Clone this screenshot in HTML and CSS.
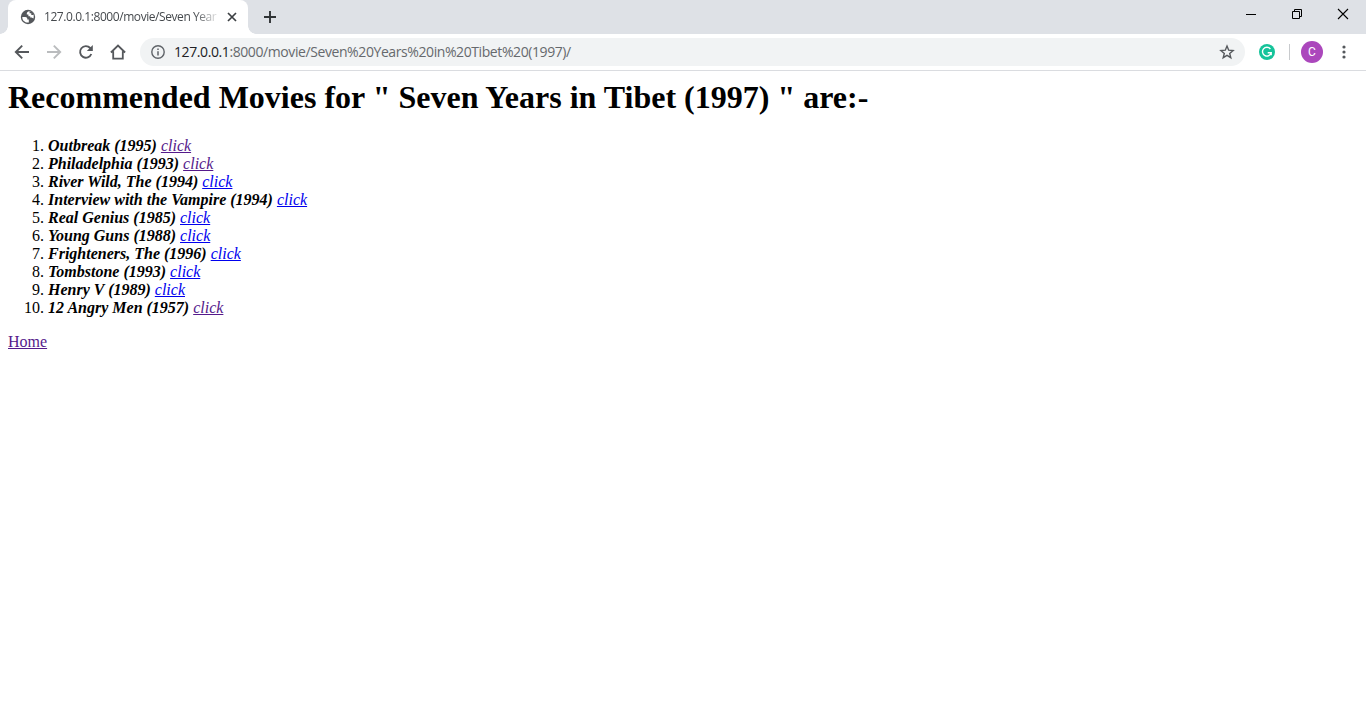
FILE: index.html
```html
<!DOCTYPE html>
<html lang="en">
<head>
<meta charset="utf-8">
<title>Recommended Movies</title>
<link rel="stylesheet" href="styles.css">
</head>
<body>
<div class="tabstrip">
  <div class="tab">
    <svg class="globe" width="16" height="16" viewBox="0 0 16 16"><circle cx="8" cy="8" r="7.2" fill="#54575b"/><path d="M2.3 8H5.2C6.6 8 7.3 8.8 7.3 9.8V10.4H8.8V13.5C5 14 2.2 11.4 2.3 8Z M9 2.3C7.4 2.7 6.8 3.6 6.8 4.8V5.4H8.4V7.2H10.2V8.6H11.6L13.5 9.4C14.6 5.3 12.2 2.3 9 2.3Z" fill="#fff"/><path d="M9.6 2.2V4.3H11.3V6H13.8L12.4 3Z" fill="#54575b"/></svg>
    <span class="tab-title">127.0.0.1:8000/movie/Seven Year</span>
    <svg class="tab-close" width="10" height="10" viewBox="0 0 10 10"><path d="M1 1L9 9M9 1L1 9" stroke="#3c4043" stroke-width="1.7"/></svg>
  </div>
  <svg class="new-tab" width="12" height="12" viewBox="0 0 12 12"><path d="M6 0V12M0 6H12" stroke="#303336" stroke-width="1.9"/></svg>
  <div class="window-controls">
    <svg width="12" height="12" viewBox="0 0 12 12"><path d="M1 6.5H11" stroke="#000"/></svg>
    <svg width="12" height="12" viewBox="0 0 12 12" fill="none" stroke="#000"><path d="M1.5 3.5H8.5V10.5H1.5Z M3.5 3.5V1.5H10.5V8.5H8.5"/></svg>
    <svg width="12" height="12" viewBox="0 0 12 12"><path d="M1 1L11 11M11 1L1 11" stroke="#000" stroke-width="1.1"/></svg>
  </div>
</div>
<div class="toolbar">
  <div class="nav">
    <svg width="16" height="16" viewBox="0 0 16 16" fill="none" stroke="#55585c" stroke-width="1.9"><path d="M15 8H2M8.2 1.6L1.8 8L8.2 14.4"/></svg>
    <svg width="16" height="16" viewBox="0 0 16 16" fill="none" stroke="#babcbe" stroke-width="1.9"><path d="M1 8H14M7.8 1.6L14.2 8L7.8 14.4"/></svg>
    <svg width="16" height="16" viewBox="0 0 16 16"><path d="M13.3 10A5.8 5.8 0 1 1 12.2 4L13.2 5.2" fill="none" stroke="#55585c" stroke-width="1.9"/><path d="M14.8 1V7H8.8Z" fill="#55585c"/></svg>
    <svg width="16" height="16" viewBox="0 0 16 16" fill="none" stroke="#55585c" stroke-width="1.8"><path d="M.9 8.5L8 1.5L15.1 8.5M3.2 7.3V14.6H12.8V7.3"/></svg>
  </div>
  <div class="omnibox">
    <svg class="info" width="14" height="14" viewBox="0 0 14 14"><circle cx="7" cy="7" r="6.2" fill="none" stroke="#5f6368" stroke-width="1.4"/><path d="M7 6.2V10.4M7 3.6V5.1" stroke="#5f6368" stroke-width="1.5"/></svg>
    <span class="url"><span class="host">127.0.0.1</span>:8000/movie/Seven%20Years%20in%20Tibet%20(1997)/</span>
    <svg class="star" width="16" height="16" viewBox="0 0 16 16"><path d="M8 2.1L9.7 6.2L14.1 6.5L10.7 9.4L11.8 13.7L8 11.4L4.2 13.7L5.3 9.4L1.9 6.5L6.3 6.2Z" fill="none" stroke="#55585c" stroke-width="1.4"/></svg>
  </div>
  <svg class="extension" width="16" height="16" viewBox="0 0 16 16"><circle cx="8" cy="8" r="8" fill="#15c39a"/><path d="M11.4 5A4.4 4.4 0 1 0 12.2 8.7H8.7M12.2 8.7V11.3" fill="none" stroke="#fff" stroke-width="1.4"/></svg>
  <span class="divider"></span>
  <span class="avatar">C</span>
  <svg class="menu" width="4" height="14" viewBox="0 0 4 14" fill="#55585c"><circle cx="2" cy="2" r="1.6"/><circle cx="2" cy="7" r="1.6"/><circle cx="2" cy="12" r="1.6"/></svg>
</div>
<main class="page">
  <h1 class="heading">Recommended Movies for " Seven Years in Tibet (1997) " are:-</h1>
  <ol class="movies">
    <li><i><b>Outbreak (1995)</b> <a class="link visited" href="#">click</a></i></li>
    <li><i><b>Philadelphia (1993)</b> <a class="link visited" href="#">click</a></i></li>
    <li><i><b>River Wild, The (1994)</b> <a class="link" href="#">click</a></i></li>
    <li><i><b>Interview with the Vampire (1994)</b> <a class="link" href="#">click</a></i></li>
    <li><i><b>Real Genius (1985)</b> <a class="link" href="#">click</a></i></li>
    <li><i><b>Young Guns (1988)</b> <a class="link" href="#">click</a></i></li>
    <li><i><b>Frighteners, The (1996)</b> <a class="link" href="#">click</a></i></li>
    <li><i><b>Tombstone (1993)</b> <a class="link" href="#">click</a></i></li>
    <li><i><b>Henry V (1989)</b> <a class="link" href="#">click</a></i></li>
    <li><i><b>12 Angry Men (1957)</b> <a class="link visited" href="#">click</a></i></li>
  </ol>
  <a class="link visited" href="#">Home</a>
</main>
</body>
</html>
```

FILE: styles.css
```css
* { box-sizing: border-box; }
body {
  margin: 0;
  height: 728px;
  overflow: hidden;
  background: #fff;
  font-family: "Liberation Serif", serif;
}
svg { display: block; flex: none; }

.tabstrip {
  display: flex;
  height: 34px;
  padding-left: 8px;
  background: #dee1e6;
}
.tab {
  position: relative;
  display: flex;
  align-items: center;
  width: 240px;
  padding-left: 12px;
  border-radius: 8px 8px 0 0;
  background: #fff;
}
.tab::before,
.tab::after {
  content: "";
  position: absolute;
  bottom: 0;
  width: 8px;
  height: 8px;
}
.tab::before { left: -8px; background: radial-gradient(circle at 0 0, transparent 7.5px, #fff 8px); }
.tab::after { right: -8px; background: radial-gradient(circle at 100% 0, transparent 7.5px, #fff 8px); }
.tab-title {
  width: 174px;
  margin-left: 8px;
  white-space: nowrap;
  font: 12px/18px "Open Sans", sans-serif;
  letter-spacing: -0.43px;
  color: #45494d;
  -webkit-mask-image: linear-gradient(90deg, #000 150px, transparent 177px);
  mask-image: linear-gradient(90deg, #000 150px, transparent 177px);
}
.tab-close { margin-left: 9px; }
.new-tab { margin: 11px 0 0 16px; }
.window-controls {
  display: flex;
  gap: 34px;
  margin-left: auto;
  padding: 8px 17px 0 0;
}

.toolbar {
  display: flex;
  align-items: center;
  height: 37px;
  padding: 0 20px 0 14px;
  border-bottom: 1px solid #dadce0;
}
.nav { display: flex; gap: 16px; }
.omnibox {
  display: flex;
  align-items: center;
  width: 1105px;
  height: 28px;
  margin-left: 14px;
  padding: 0 10px 0 11px;
  border-radius: 14px;
  background: #f1f3f4;
}
.url {
  margin-left: 9px;
  white-space: nowrap;
  font: 14px/20px "Open Sans", sans-serif;
  letter-spacing: -0.41px;
  color: #66696d;
}
.host { color: #202124; }
.star { margin-left: auto; }
.extension { margin-left: 14px; }
.divider { width: 1px; height: 16px; margin-left: 14px; background: #c8cacd; }
.avatar {
  width: 22px;
  height: 22px;
  margin-left: 11px;
  border-radius: 50%;
  background: #ab47bc;
  color: #fff;
  font: 12px/22px Roboto, sans-serif;
  text-align: center;
}
.menu { margin-left: auto; }

.page { padding: 8px; font-size: 16px; line-height: 18px; }
.heading { margin: 0 0 21px; font-size: 32px; line-height: 37px; white-space: nowrap; }
.movies { margin: 0 0 16px; padding-left: 40px; }
.link { color: #0000ee; }
.visited { color: #551a8b; }
```
